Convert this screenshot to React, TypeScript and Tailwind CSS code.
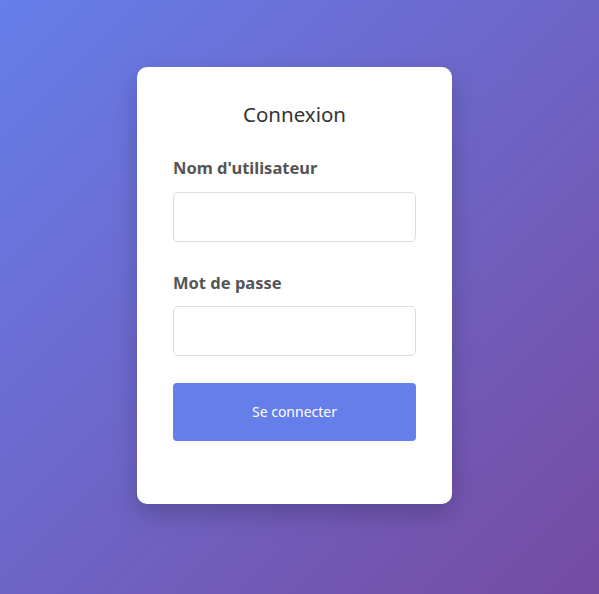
import React from 'react';

export default function App() {
  return (
    <div className="min-h-screen w-full flex items-center justify-center pr-[10px] pb-[24px] bg-[linear-gradient(135deg,#667eea_0%,#764ba2_100%)] font-['Noto_Sans',sans-serif]">
      <div className="w-[315px] bg-white rounded-[10px] shadow-[0_10px_25px_rgba(0,0,0,0.2)] px-9 pt-9 pb-[63px]">
        <h2 className="text-center text-[20.5px] leading-[22px] text-[#333] mb-[33px]">Connexion</h2>
        <form className="flex flex-col" onSubmit={(e) => e.preventDefault()}>
          <label className="block text-[16.5px] leading-[20px] font-bold text-[#555] mb-[14px]">Nom d'utilisateur</label>
          <input type="text" className="h-[50px] w-full border border-[#ddd] rounded-[5px] px-3 mb-[31px] outline-none" />
          <label className="block text-[16.5px] leading-[20px] font-bold text-[#555] mb-[13px]">Mot de passe</label>
          <input type="password" className="h-[50px] w-full border border-[#ddd] rounded-[5px] px-3 mb-[27px] outline-none" />
          <button type="submit" className="h-[58px] w-full bg-[#667eea] text-white text-[14px] rounded-[4px]">Se connecter</button>
        </form>
      </div>
    </div>
  );
}
